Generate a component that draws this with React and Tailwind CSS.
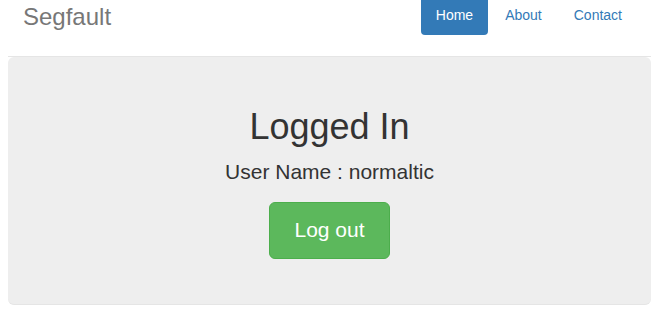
import React from 'react';

export default function App() {
  return (
    <div className="min-h-[331px] bg-white pl-[8px] pr-[12px] text-[#333] font-['Liberation_Sans',Arial,sans-serif]">
      <div className="flex h-[57px] items-start justify-between border-b border-[#e5e5e5] pl-[15px] pr-[14px]">
        <h3 className="text-[24px] leading-[34px] text-[#777]">Segfault</h3>
        <ul className="flex gap-[2px] text-[14px] leading-[20px]">
          <li>
            <a className="block h-[35px] rounded-b-[4px] bg-[#337ab7] px-[15px] pt-[5px] text-white" href="#">
              Home
            </a>
          </li>
          <li>
            <a className="block h-[35px] px-[15px] pt-[5px] text-[#337ab7]" href="#">
              About
            </a>
          </li>
          <li>
            <a className="block h-[35px] px-[15px] pt-[5px] text-[#337ab7]" href="#">
              Contact
            </a>
          </li>
        </ul>
      </div>

      <div className="rounded-[6px] border-b border-[#e5e5e5] bg-[#eee] px-[15px] pt-[30px] pb-[30px] text-center">
        <h1 className="mt-[20px] mb-[10px] text-[36px] leading-[1.1]">Logged In</h1>
        <p className="mb-[15px] text-[21px] leading-[30px] font-extralight">User Name : normaltic</p>
        <p className="mb-[15px]">
          <a
            className="inline-block rounded-[6px] border border-[#4cae4c] bg-[#5cb85c] px-[24px] pt-[13px] pb-[14px] text-[21px] leading-[28px] text-white"
            href="#"
          >
            Log out
          </a>
        </p>
      </div>
    </div>
  );
}
